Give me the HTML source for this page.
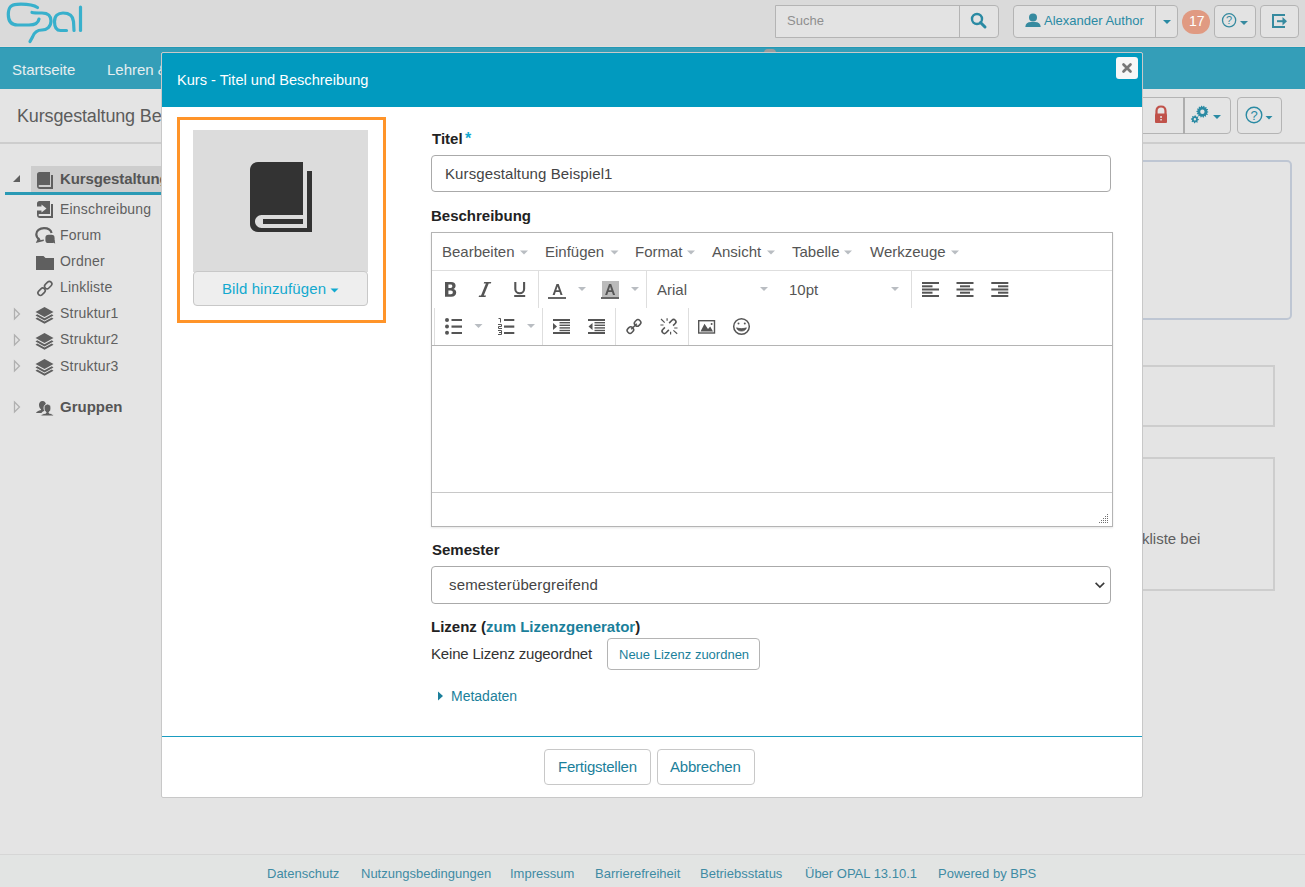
<!DOCTYPE html>
<html><head><meta charset="utf-8">
<style>
*{box-sizing:border-box;margin:0;padding:0}
html,body{width:1305px;height:887px;overflow:hidden}
body{position:relative;background:#e4e4e4;font-family:"Liberation Sans",sans-serif;font-size:15px;color:#333}
.a{position:absolute}
.hdr{left:0;top:0;width:1305px;height:46px;background:#dadada}
.hline{left:0;top:46px;width:1305px;height:1px;background:#e2dddc}
.nav{left:0;top:47px;width:1305px;height:42px;background:#349eb8;border-top:1px solid #2398b5}
.nav span{position:absolute;top:13px;color:#e6eef0;font-size:15px}
.btn{position:absolute;border:1px solid #b4b4b4;border-radius:4px;background:#e4e4e4}
.tr{font-size:14px;color:#5f5f5f;letter-spacing:0.2px}
.mb{top:244px;font-size:15px;color:#555}
.txt{position:absolute;white-space:nowrap;line-height:1}
</style></head>
<body>
<!-- header -->
<div class="a hdr"></div>
<div class="a hline"></div>
<!-- logo -->
<svg class="a" style="left:0;top:0" width="100" height="46" viewBox="0 0 100 46">
<g fill="none" stroke="#38b0cc" stroke-width="3.2" stroke-linecap="round">
<path d="M37.5,7.5 C33,4.5 24,4 17,4.3 C9,4.5 8.3,9.5 8.3,14.5 C8.3,21 11,25 17.5,25 L29,25 C36,25 38.5,22 39,19"/>
<path d="M32,12.5 C34,13 38,13 42,13 C48,13 51,16 51,21 C51,26.5 47,30 42,30 C36,30 34,33 32.5,37 L30,41.5"/>
<path d="M66.5,30.5 C64,30.5 62,30.5 60.5,30.5 C56,30.5 54.5,26 54.5,21.5 C54.5,16 58,13 63,13 C69,13 73,15.5 73.5,21.5 L74,30.5"/>
<path d="M80.5,7 L80.5,30.5"/>
</g></svg>
<!-- search -->
<div class="a" style="left:775px;top:5px;width:224px;height:33px;border:1px solid #b4b4b4;border-radius:0 4px 4px 0;background:#e3e3e3"></div>
<div class="a" style="left:959px;top:5px;width:1px;height:33px;background:#b4b4b4"></div>
<div class="txt" style="left:787px;top:14px;font-size:13px;color:#8f8f8f">Suche</div>
<svg class="a" style="left:969px;top:11px" width="20" height="20" viewBox="0 0 20 20"><circle cx="8" cy="8" r="5" fill="none" stroke="#2a8aa3" stroke-width="2.4"/><path d="M11.5,11.5 L16,16" stroke="#2a8aa3" stroke-width="3" stroke-linecap="round"/></svg>
<!-- user -->
<div class="a" style="left:1013px;top:5px;width:165px;height:33px;border:1px solid #b4b4b4;border-radius:4px;background:#e3e3e3"></div>
<div class="a" style="left:1155px;top:5px;width:1px;height:33px;background:#b4b4b4"></div>
<svg class="a" style="left:1025px;top:13px" width="17" height="16" viewBox="0 0 17 16"><circle cx="8" cy="4.4" r="4" fill="#368a9f"/><path d="M0.3,14 C0.5,10.8 2.5,9 6,9 L10,9 C13.5,9 15.5,10.8 15.7,14 Z" fill="#368a9f"/></svg>
<div class="txt" style="left:1044px;top:14px;font-size:13px;color:#2a8aa3">Alexander Author</div>
<svg class="a" style="left:1163px;top:20px" width="10" height="6"><path d="M0,0 L8,0 L4,4 Z" fill="#2a8aa3"/></svg>
<div class="a" style="left:1182px;top:10px;width:28px;height:24px;border-radius:12px;background:#e09a82"></div>
<div class="txt" style="left:1189px;top:14px;font-size:14px;color:#fff">17</div>
<div class="a" style="left:1214px;top:5px;width:42px;height:33px;border:1px solid #b4b4b4;border-radius:4px;background:#e3e3e3"></div>
<svg class="a" style="left:1221px;top:12px" width="30" height="20" viewBox="0 0 30 20"><circle cx="8.1" cy="8.3" r="6.6" fill="none" stroke="#368a9f" stroke-width="1.3"/><text x="8.1" y="12.4" font-size="11" text-anchor="middle" fill="#368a9f" font-family="Liberation Sans">?</text><path d="M19,9 L27,9 L23,13 Z" fill="#368a9f"/></svg>
<div class="a" style="left:1260px;top:5px;width:39px;height:33px;border:1px solid #b4b4b4;border-radius:4px;background:#e3e3e3"></div>
<svg class="a" style="left:1271px;top:13px" width="18" height="16" viewBox="0 0 18 16"><path d="M14,1.9 L2,1.9 L2,14.1 L14,14.1" fill="none" stroke="#368a9f" stroke-width="2"/><rect x="6" y="7.2" width="6" height="2" fill="#368a9f"/><path d="M11.5,4 L16,8.2 L11.5,12.4 Z" fill="#368a9f"/></svg>
<div class="a nav"><span style="left:12px">Startseite</span><span style="left:107px">Lehren &amp; Lernen</span></div>

<!-- title row -->
<div class="txt" style="left:17px;top:107px;font-size:18px;letter-spacing:-0.15px;color:#5c5c5c">Kursgestaltung Beispiel1</div>
<div class="a" style="left:0;top:142px;width:1305px;height:2px;background:#cdcdcd"></div>

<!-- title row buttons (right, partially hidden) -->
<div class="a" style="left:1100px;top:97px;width:131px;height:37px;border:1px solid #b4b4b4;border-radius:4px;background:#e4e4e4"></div>
<div class="a" style="left:1183px;top:97px;width:2px;height:37px;background:#adadad"></div>
<svg class="a" style="left:1150px;top:104px" width="22" height="22" viewBox="0 0 22 22"><path d="M6.5,10 L6.5,7 C6.5,4 8.3,2.5 11,2.5 C13.7,2.5 15.5,4 15.5,7 L15.5,10" fill="none" stroke="#c0524a" stroke-width="2.2"/><rect x="5" y="9.5" width="12" height="9.5" rx="1" fill="#c0524a"/><rect x="10.3" y="12" width="1.5" height="2" fill="#e4e4e4"/><rect x="10.3" y="15" width="1.5" height="1.5" fill="#e4e4e4"/></svg>
<svg class="a" style="left:1190px;top:104px" width="40" height="22" viewBox="0 0 40 22" id="gears"><path fill-rule="evenodd" d="M18.40,7.70 L18.36,8.37 L17.18,8.79 L17.03,9.32 L17.81,10.30 L17.48,10.89 L16.23,10.76 L15.86,11.16 L16.14,12.39 L15.59,12.78 L14.53,12.11 L14.02,12.33 L13.74,13.55 L13.07,13.66 L12.40,12.60 L11.85,12.57 L11.06,13.55 L10.42,13.36 L10.27,12.11 L9.79,11.85 L8.66,12.39 L8.16,11.94 L8.57,10.76 L8.25,10.31 L6.99,10.30 L6.74,9.68 L7.62,8.79 L7.53,8.25 L6.40,7.70 L6.44,7.03 L7.62,6.61 L7.77,6.08 L6.99,5.10 L7.32,4.51 L8.57,4.64 L8.94,4.24 L8.66,3.01 L9.21,2.62 L10.27,3.29 L10.78,3.07 L11.06,1.85 L11.73,1.74 L12.40,2.80 L12.95,2.83 L13.74,1.85 L14.38,2.04 L14.53,3.29 L15.01,3.55 L16.14,3.01 L16.64,3.46 L16.23,4.64 L16.55,5.09 L17.81,5.10 L18.06,5.72 L17.18,6.61 L17.27,7.15 Z M14.600000000000001,7.7 A2.2,2.2 0 1,0 10.2,7.7 A2.2,2.2 0 1,0 14.600000000000001,7.7 Z" fill="#2a8aa3"/><path fill-rule="evenodd" d="M8.90,15.30 L8.82,16.08 L7.67,16.45 L7.39,16.97 L7.73,18.13 L7.12,18.63 L6.05,18.07 L5.49,18.24 L4.90,19.30 L4.12,19.22 L3.75,18.07 L3.23,17.79 L2.07,18.13 L1.57,17.52 L2.13,16.45 L1.96,15.89 L0.90,15.30 L0.98,14.52 L2.13,14.15 L2.41,13.63 L2.07,12.47 L2.68,11.97 L3.75,12.53 L4.31,12.36 L4.90,11.30 L5.68,11.38 L6.05,12.53 L6.57,12.81 L7.73,12.47 L8.23,13.08 L7.67,14.15 L7.84,14.71 Z M6.1000000000000005,15.3 A1.2,1.2 0 1,0 3.7,15.3 A1.2,1.2 0 1,0 6.1000000000000005,15.3 Z" fill="#2a8aa3"/><path d="M23,11 L31,11 L27,15 Z" fill="#2a8aa3"/></svg>
<div class="a" style="left:1237px;top:97px;width:45px;height:37px;border:1px solid #b4b4b4;border-radius:4px;background:#e4e4e4"></div>
<svg class="a" style="left:1243px;top:104px" width="36" height="24" viewBox="0 0 36 24"><circle cx="11" cy="11" r="7.8" fill="none" stroke="#2a8aa3" stroke-width="1.4"/><text x="11" y="15.5" font-size="13" text-anchor="middle" fill="#2a8aa3" font-family="Liberation Sans">?</text><path d="M22.5,12 L29.5,12 L26,15.5 Z" fill="#2a8aa3"/></svg>
<!-- right panels -->
<div class="a" style="left:1100px;top:160px;width:192px;height:160px;border:2px solid #bec6d3;border-radius:5px"></div>
<div class="a" style="left:1100px;top:365px;width:175px;height:62px;border:2px solid #cdcdcd"></div>
<div class="a" style="left:1100px;top:457px;width:175px;height:134px;border:2px solid #cdcdcd"></div>
<div class="txt" style="left:1122px;top:531px;font-size:15px;color:#5e5e5e">Linkliste bei</div>
<!-- tree -->
<div class="a" style="left:31px;top:166px;width:140px;height:26px;background:#cdcdcd"></div>
<div class="a" style="left:5px;top:192px;width:160px;height:3px;background:#2a9ab5"></div>
<svg class="a" style="left:12px;top:174px" width="9" height="9"><path d="M1,8 L8,8 L8,1 Z" fill="#5f5f5f"/></svg>
<div class="txt" style="left:60px;top:171px;font-size:15px;font-weight:bold;letter-spacing:-0.1px;color:#555">Kursgestaltung Beispiel1</div>
<div class="txt tr" style="left:60px;top:202px">Einschreibung</div>
<div class="txt tr" style="left:60px;top:228px">Forum</div>
<div class="txt tr" style="left:60px;top:254px">Ordner</div>
<div class="txt tr" style="left:60px;top:280px">Linkliste</div>
<div class="txt tr" style="left:60px;top:306px">Struktur1</div>
<div class="txt tr" style="left:60px;top:332px">Struktur2</div>
<div class="txt tr" style="left:60px;top:359px">Struktur3</div>
<div class="txt" style="left:60px;top:399px;font-size:15px;font-weight:bold;color:#555">Gruppen</div>
<svg class="a" style="left:0;top:160px" width="60" height="270" viewBox="0 160 60 270" id="treeicons"><g fill="#5f5f5f">
<!-- book -->
<path d="M39.5,172 L50,172 L50,185 L40,185 C39,185 38.5,185.5 38.5,186 C38.5,186.5 39,187 40,187 L51,187 L51,175 L53,175 L53,189 L40,189 C38.3,189 37,188 37,186 L37,174.5 C37,173 38,172 39.5,172 Z"/>
<!-- einschreibung -->
<path d="M39.5,201 L50,201 L50,214 L40,214 C39,214 38.5,214.5 38.5,215 C38.5,215.5 39,216 40,216 L51,216 L51,204 L53,204 L53,218 L40,218 C38.3,218 37,217 37,215 L37,210.5 L41.5,210.5 L41.5,212.5 L46.5,208.5 L41.5,204.5 L41.5,206.5 L37,206.5 L37,203.5 C37,202 38,201 39.5,201 Z"/>
<!-- forum -->
<path d="M51.6,233 C50.8,229.8 47.8,228.2 44,228.2 C39.6,228.2 36.3,230.9 36.3,234.2 C36.3,236.3 37.4,238 39.3,239.1" fill="none" stroke="#5f5f5f" stroke-width="2.2"/>
<path d="M38.2,237.8 L40.6,239.2 L39.6,240.2 L43.8,239.4 L43.8,241 L35.8,243 Z"/>
<rect x="45.4" y="234.8" width="9.2" height="8.3" rx="3.2"/>
<path d="M52,241.5 L55.2,243.8 L54.6,240 Z"/>
<!-- folder -->
<path d="M36,256 L43.5,256 L45.5,258 L54,258 L54,270 L36,270 Z"/>
<!-- layers -->
<g id="lay"><path d="M44.5,307 L53.5,312 L44.5,317 L35.5,312 Z"/><path d="M37.2,314.2 L35.5,315.5 L44.5,320.5 L53.5,315.5 L51.8,314.2 L44.5,318.3 Z"/><path d="M37.2,317.4 L35.5,318.7 L44.5,323.7 L53.5,318.7 L51.8,317.4 L44.5,321.5 Z"/></g>
<use href="#lay" y="26"/><use href="#lay" y="52"/>
<!-- group -->
<path d="M42.5,401 C40.2,401 39,402.8 39,405 C39,406.8 39.8,408.4 41,409.2 L41,410 C38.5,410.5 36.5,411.5 36,413 L41.5,413 C42,411.8 43.5,411 45.3,410.4 L44,410 L44,409.2 C45.2,408.4 46,406.8 46,405 C46,402.8 44.8,401 42.5,401 Z"/>
<path d="M47.5,404 C45.2,404 44,405.8 44,408 C44,409.8 44.8,411.4 46,412.2 L46,413 C43,413.5 41,414.5 40.5,416 L54,416 C53.5,414.5 51.5,413.5 49,413 L49,412.2 C50.2,411.4 51,409.8 51,408 C51,405.8 49.8,404 47.5,404 Z" stroke="#e4e4e4" stroke-width="1"/>
</g>
<!-- tlink -->
<g fill="none" stroke="#5f5f5f" stroke-width="1.6" transform="translate(44.9,288.4) rotate(-45)">
<rect x="0.6" y="-2.5" width="8.2" height="5" rx="2.5"/>
<rect x="-8.8" y="-2.5" width="8.2" height="5" rx="2.5"/>
</g>
<!-- triangles -->
<g fill="none" stroke="#b0b0b0" stroke-width="1.3">
<path d="M14.5,309 L19.5,314 L14.5,319 Z"/><path d="M14.5,335 L19.5,340 L14.5,345 Z"/><path d="M14.5,361 L19.5,366 L14.5,371 Z"/><path d="M14.5,402 L19.5,407 L14.5,412 Z"/>
</g>
</svg>
<div class="a" style="left:764px;top:49px;width:12px;height:4px;border-radius:6px 6px 0 0;background:#9c9c9c"></div>
<!-- modal -->
<div class="a" style="left:161px;top:52px;width:982px;height:746px;background:#fff;border:1px solid #c8c8c8;border-radius:2px"></div>
<div class="a" style="left:162px;top:53px;width:980px;height:54px;background:#019abf;border-radius:1px 1px 0 0"></div>
<div class="txt" style="left:177px;top:73px;color:#fff;font-size:14.6px">Kurs - Titel und Beschreibung</div>
<div class="a" style="left:1116px;top:57px;width:22px;height:22px;background:#f7f7f7;border-radius:3px"></div>
<svg class="a" style="left:1116px;top:57px" width="22" height="22" viewBox="0 0 22 22"><path d="M7.5,7.5 L14.5,14.5 M14.5,7.5 L7.5,14.5" stroke="#777" stroke-width="2.7" stroke-linecap="round"/></svg>
<!-- image box -->
<div class="a" style="left:177px;top:117px;width:209px;height:206px;border:3px solid #ff9429"></div>
<div class="a" style="left:193px;top:130px;width:175px;height:142px;background:#dcdcdc"></div>
<svg class="a" style="left:193px;top:130px" width="175" height="142" viewBox="193 130 175 142">
<path d="M258,162 L303,162 L303,232 L258,232 C253.5,232 250,228.5 250,224 L250,170 C250,165.5 253.5,162 258,162 Z" fill="#333"/>
<rect x="307" y="171" width="5" height="61" fill="#333"/>
<rect x="258" y="228" width="54" height="4" fill="#333"/>
<path d="M303,162 L307,162 L307,228 L261.5,228 C258,228 255,225 255,221.5 C255,218 258,215 261.5,215 L303,215 Z" fill="#dcdcdc"/>
<rect x="263" y="219" width="40" height="5" fill="#333"/>
</svg>
<div class="a" style="left:193px;top:271px;width:175px;height:35px;background:#eee;border:1px solid #c8c8c8;border-radius:4px"></div>
<div class="txt" style="left:222px;top:281px;font-size:15px;letter-spacing:0.1px;color:#12a9cf">Bild hinzufügen</div>
<svg class="a" style="left:330px;top:288px" width="10" height="6"><path d="M0.5,0.5 L8.5,0.5 L4.5,4.5 Z" fill="#12a9cf"/></svg>
<!-- titel -->
<div class="txt" style="left:432px;top:131px;font-size:15px;font-weight:bold;color:#222">Titel</div>
<div class="txt" style="left:465px;top:131px;font-size:16px;font-weight:bold;color:#13a9d0">*</div>
<div class="a" style="left:431px;top:155px;width:680px;height:37px;border:1px solid #aaa;border-radius:4px"></div>
<div class="txt" style="left:445px;top:166px;font-size:15px;letter-spacing:0.1px;color:#444">Kursgestaltung Beispiel1</div>
<div class="txt" style="left:431px;top:208px;font-size:15px;font-weight:bold;color:#222">Beschreibung</div>
<!-- editor -->
<div class="a" style="left:431px;top:232px;width:682px;height:295px;border:1px solid #b4b4b4;box-shadow:0 1px 2px rgba(0,0,0,0.1)"></div>
<div class="a" style="left:432px;top:270px;width:680px;height:1px;background:#dedede"></div>
<div class="a" style="left:432px;top:345px;width:680px;height:1px;background:#b4b4b4"></div>
<div class="a" style="left:432px;top:492px;width:680px;height:1px;background:#c8c8c8"></div>
<div class="txt mb" style="left:442px">Bearbeiten</div>
<div class="txt mb" style="left:545px">Einfügen</div>
<div class="txt mb" style="left:635px">Format</div>
<div class="txt mb" style="left:712px">Ansicht</div>
<div class="txt mb" style="left:792px">Tabelle</div>
<div class="txt mb" style="left:870px">Werkzeuge</div>
<div class="txt mb" style="left:657px;top:282px">Arial</div>
<div class="txt mb" style="left:789px;top:282px">10pt</div>
<svg class="a" style="left:431px;top:232px" width="682" height="114" viewBox="431 232 682 114">
<g fill="#b9bdc2">
<path d="M520,250.5 L528,250.5 L524,254.5 Z"/><path d="M610.5,250.5 L618.5,250.5 L614.5,254.5 Z"/><path d="M687,250.5 L695,250.5 L691,254.5 Z"/><path d="M767,250.5 L775,250.5 L771,254.5 Z"/><path d="M844,250.5 L852,250.5 L848,254.5 Z"/><path d="M951,250.5 L959,250.5 L955,254.5 Z"/>
<path d="M578,287 L586,287 L582,291 Z"/><path d="M631,287 L639,287 L635,291 Z"/><path d="M760,287 L768,287 L764,291 Z"/><path d="M891,287 L899,287 L895,291 Z"/>
<path d="M474.5,324 L482.5,324 L478.5,328 Z"/><path d="M527,324 L535,324 L531,328 Z"/>
</g>
<g fill="#dedede">
<rect x="538" y="271" width="1" height="37"/><rect x="646" y="271" width="1" height="37"/><rect x="911" y="271" width="1" height="37"/>
<rect x="434" y="308" width="1" height="37"/><rect x="542" y="308" width="1" height="37"/><rect x="615" y="308" width="1" height="37"/><rect x="688" y="308" width="1" height="37"/>
</g>
<g fill="#555">
<path d="M445,282 L451,282 C454.2,282 455.6,283.6 455.6,285.8 C455.6,287.4 454.8,288.5 453.4,289 C455.2,289.5 456.2,290.8 456.2,292.6 C456.2,295.2 454.5,296.8 451.2,296.8 L445,296.8 Z M448.4,284.6 L448.4,288 L450.6,288 C451.8,288 452.3,287.4 452.3,286.3 C452.3,285.2 451.8,284.6 450.6,284.6 Z M448.4,290.4 L448.4,294.2 L450.9,294.2 C452.2,294.2 452.8,293.5 452.8,292.3 C452.8,291.1 452.2,290.4 450.9,290.4 Z"/>
<path d="M484.2,282 L491.3,282 L490.8,283.6 L488.7,283.6 L483.8,295.4 L486,295.4 L485.5,297 L478.6,297 L479.1,295.4 L481,295.4 L485.9,283.6 L483.7,283.6 Z"/>
<path d="M515.3,282 V289 A4.4,4.3 0 0 0 524.1,289 V282" fill="none" stroke="#555" stroke-width="2.1"/>
<rect x="514.2" y="295" width="11" height="2"/>
</g>
<path d="M552.6,295 L556.5,284 L558.7,284 L562.6,295 L560.5,295 L559.5,292 L555.7,292 L554.7,295 Z M556.3,290.3 L558.9,290.3 L557.6,286.4 Z" fill="#555"/>
<rect x="548" y="297" width="18" height="2" fill="#666"/>
<rect x="602" y="281" width="17" height="18" fill="#bbb"/>
<path d="M605.1,295 L609,284 L611.2,284 L615.1,295 L613,295 L612,292 L608.2,292 L607.2,295 Z M608.8,290.3 L611.4,290.3 L610.1,286.4 Z" fill="#555"/>
<rect x="601" y="297" width="18" height="2" fill="#666"/>
<g fill="#555">
<rect x="922" y="282" width="17" height="2"/><rect x="922" y="285.3" width="10.5" height="2"/><rect x="922" y="288.5" width="17" height="2"/><rect x="922" y="291.7" width="10.5" height="2"/><rect x="922" y="295" width="17" height="2"/>
<rect x="956.5" y="282" width="17" height="2"/><rect x="960" y="285.3" width="10" height="2"/><rect x="956.5" y="288.5" width="17" height="2"/><rect x="960" y="291.7" width="10" height="2"/><rect x="956.5" y="295" width="17" height="2"/>
<rect x="991.3" y="282" width="17" height="2"/><rect x="998" y="285.3" width="10.3" height="2"/><rect x="991.3" y="288.5" width="17" height="2"/><rect x="998" y="291.7" width="10.3" height="2"/><rect x="991.3" y="295" width="17" height="2"/>
</g>
<g fill="#555">
<circle cx="447" cy="320" r="2"/><circle cx="447" cy="326.5" r="2"/><circle cx="447" cy="332.8" r="2"/>
<rect x="451.5" y="319" width="10.5" height="2"/><rect x="451.5" y="325.5" width="10.5" height="2.2"/><rect x="451.5" y="332" width="10.5" height="2"/>
<rect x="504" y="319" width="10.3" height="2"/><rect x="504" y="325.5" width="10.3" height="2.2"/><rect x="504" y="332" width="10.3" height="2"/>
</g>
<g fill="none" stroke="#555" stroke-width="1">
<path d="M498.5,318.5 L500.5,318.5 L500.5,322.5"/>
<path d="M498,324.5 L501.5,324.5 L501.5,326.5 L498.5,326.5 L498.5,328.5 L502,328.5"/>
<path d="M498,330.5 L501.5,330.5 L501.5,334.5 L498,334.5 M499,332.5 L501.5,332.5"/>
</g>
<g fill="#555">
<rect x="553" y="319" width="17" height="2"/><rect x="553" y="332" width="17" height="2"/>
<rect x="559.5" y="322" width="10.5" height="1.4"/><rect x="559.5" y="324.6" width="10.5" height="1.4"/><rect x="559.5" y="327.2" width="10.5" height="1.4"/><rect x="559.5" y="329.8" width="10.5" height="1.4"/>
<path d="M553,323 L557,326.5 L553,330 Z"/>
<rect x="588" y="319" width="17" height="2"/><rect x="588" y="332" width="17" height="2"/>
<rect x="594.5" y="322" width="10.5" height="1.4"/><rect x="594.5" y="324.6" width="10.5" height="1.4"/><rect x="594.5" y="327.2" width="10.5" height="1.4"/><rect x="594.5" y="329.8" width="10.5" height="1.4"/>
<path d="M592.5,323 L588.5,326.5 L592.5,330 Z"/>
</g>
<!-- link -->
<g fill="none" stroke="#555" stroke-width="1.5" transform="translate(634,326.5) rotate(-45)">
<rect x="1.8" y="-2.8" width="6.6" height="5.6" rx="2.6"/>
<rect x="-8.4" y="-2.8" width="6.6" height="5.6" rx="2.6"/>
<path d="M-4,0 L4,0"/>
</g>
<!-- unlink -->
<g fill="none" stroke="#555" stroke-width="1.6" transform="translate(669,326.5) rotate(-45)">
<path d="M2.5,-2.3 L6.5,-2.3 A2.3,2.3 0 0 1 6.5,2.3 L3.5,2.3"/>
<path d="M-2.5,2.3 L-6.5,2.3 A2.3,2.3 0 0 1 -6.5,-2.3 L-3.5,-2.3"/>
</g>
<g stroke="#555" stroke-width="1.2">
<path d="M661,319 L664.7,322.6 M667.1,318.3 L667.1,320.8 M660.4,325 L663.5,325 M677.2,333.8 L673.4,330.4 M670.6,334.5 L670.6,331.8 M677.5,328 L674.2,328"/>
</g>
<!-- image -->
<rect x="698.7" y="320.7" width="15.8" height="12.3" fill="none" stroke="#555" stroke-width="1.4"/>
<path d="M700.5,331.5 L704.5,323.8 L708,329 L710.2,326.6 L713,331.5 Z" fill="#555"/>
<circle cx="711.6" cy="324" r="1" fill="#555"/>
<!-- emoji -->
<circle cx="741.5" cy="326.5" r="7.8" fill="none" stroke="#555" stroke-width="1.5"/>
<circle cx="738.5" cy="323.5" r="1" fill="#555"/><circle cx="744.8" cy="323.5" r="1" fill="#555"/>
<path d="M736.6,327.8 C737.5,332.2 745.5,332.2 746.4,327.8 C743.5,328.9 739.5,328.9 736.6,327.8 Z" fill="#555" stroke="#555" stroke-width="0.7"/>

</svg>

<svg class="a" style="left:1096px;top:510px" width="14" height="15" viewBox="1096 510 14 15"><g fill="#707070"><rect x="1099" y="522" width="1" height="1"/><rect x="1101" y="522" width="1" height="1"/><rect x="1101" y="520" width="1" height="1"/><rect x="1103" y="522" width="1" height="1"/><rect x="1103" y="520" width="1" height="1"/><rect x="1103" y="518" width="1" height="1"/><rect x="1105" y="522" width="1" height="1"/><rect x="1105" y="520" width="1" height="1"/><rect x="1105" y="518" width="1" height="1"/><rect x="1105" y="516" width="1" height="1"/><rect x="1107" y="522" width="1" height="1"/><rect x="1107" y="520" width="1" height="1"/><rect x="1107" y="518" width="1" height="1"/><rect x="1107" y="516" width="1" height="1"/><rect x="1107" y="514" width="1" height="1"/></g></svg>
<!-- semester -->
<div class="txt" style="left:432px;top:542px;font-size:15px;font-weight:bold;color:#222">Semester</div>
<div class="a" style="left:431px;top:566px;width:680px;height:38px;border:1px solid #aaa;border-radius:4px"></div>
<div class="txt" style="left:449px;top:577px;font-size:15px;letter-spacing:0.15px;color:#444">semesterübergreifend</div>
<svg class="a" style="left:1092px;top:579px" width="14" height="12" viewBox="0 0 14 12"><path d="M3.6,3.9 L7.9,8.1 L12.2,3.9" fill="none" stroke="#3a3a3a" stroke-width="1.6"/></svg>
<!-- lizenz -->
<div class="txt" style="left:431px;top:619px;font-size:15px;font-weight:bold;color:#222">Lizenz (<span style="color:#1b7f9b">zum Lizenzgenerator</span>)</div>
<div class="txt" style="left:431px;top:646px;font-size:15px;letter-spacing:-0.18px;color:#333">Keine Lizenz zugeordnet</div>
<div class="a" style="left:607px;top:638px;width:153px;height:32px;border:1px solid #b4b4b4;border-radius:4px"></div>
<div class="txt" style="left:619px;top:648px;font-size:13px;color:#1b7f9b">Neue Lizenz zuordnen</div>
<svg class="a" style="left:437px;top:691px" width="8" height="10"><path d="M1,0.5 L6,5 L1,9.5 Z" fill="#1b7f9b"/></svg>
<div class="txt" style="left:451px;top:689px;font-size:14px;color:#1b7f9b">Metadaten</div>
<!-- footer -->
<div class="a" style="left:162px;top:736px;width:980px;height:1px;background:#1a9cc0"></div>
<div class="a" style="left:544px;top:749px;width:107px;height:36px;border:1px solid #c8c8c8;border-radius:4px"></div>
<div class="txt" style="left:558px;top:759px;font-size:15px;letter-spacing:-0.22px;color:#1b7f9b">Fertigstellen</div>
<div class="a" style="left:657px;top:749px;width:98px;height:36px;border:1px solid #c8c8c8;border-radius:4px"></div>
<div class="txt" style="left:670px;top:759px;font-size:15px;letter-spacing:-0.22px;color:#1b7f9b">Abbrechen</div>
<!-- page footer -->
<div class="a" style="left:0;top:855px;width:1305px;height:32px;background:#e2e4e3"></div>
<div class="a" style="left:0;top:854px;width:1305px;height:1px;background:#d6d6d6"></div>
<div class="txt" style="left:267px;top:867px;font-size:13px;color:#3f8ba3;word-spacing:0">
<span style="position:absolute;left:0">Datenschutz</span><span style="position:absolute;left:94px">Nutzungsbedingungen</span><span style="position:absolute;left:243px">Impressum</span><span style="position:absolute;left:328px">Barrierefreiheit</span><span style="position:absolute;left:433px">Betriebsstatus</span><span style="position:absolute;left:538px">Über OPAL 13.10.1</span><span style="position:absolute;left:671px">Powered by BPS</span></div>
</body></html>
